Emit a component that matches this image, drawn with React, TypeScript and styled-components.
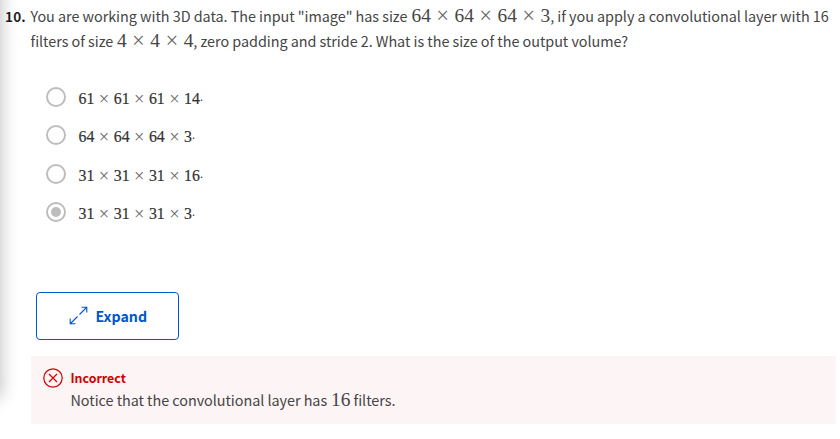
import React from "react";
import styled, { createGlobalStyle } from "styled-components";

const GlobalStyle = createGlobalStyle`
  * { box-sizing: border-box; }
  html, body { margin: 0; background: #fff; }
  body { overflow: hidden; }
`;

const Page = styled.main`
  position: relative;
  width: 840px;
  height: 439px;
  overflow: hidden;
  padding: 3px 4px 0 5px;
  background: #fff;
  color: #454545;
  font: 400 14.4px/25px "Noto Sans CJK SC", "Open Sans", sans-serif;
`;

const EdgeShadow = styled.div`
  position: absolute;
  left: -20px;
  top: -30px;
  width: 20px;
  height: 428px;
  box-shadow: 0 0 18px rgba(0, 0, 0, 0.28);
`;

const Question = styled.section`
  display: grid;
  grid-template-columns: 25.5px 1fr;
  height: 84px;
`;

const Ordinal = styled.b`
  color: #1f1f1f;
  font-size: 13.5px;
  line-height: 26px;
  letter-spacing: 0.2px;
`;

const Line = styled.div`
  display: flex;
  height: 25px;
  align-items: baseline;
  white-space: pre;
`;

const Run = styled.span<{ $width?: number }>`
  flex: none;
  width: ${(p) => (p.$width ? `${p.$width}px` : "auto")};
  letter-spacing: -0.042px;
`;

const MathRow = styled.span<{ $size: number; $heavy?: boolean }>`
  display: inline-flex;
  flex: none;
  align-items: baseline;
  font-family: "Liberation Serif", serif;
  font-size: ${(p) => p.$size}px;
  font-weight: 400;
  line-height: ${(p) => (p.$heavy ? 23 : 25)}px;
  -webkit-text-stroke: ${(p) => (p.$heavy ? "0.2px currentColor" : "0")};
`;

const Times = styled.span`
  display: flex;
  justify-content: center;
  width: 0.778em;
  margin: 0 0.222em;
  color: #666;
  -webkit-text-stroke: 0;
  span {
    font-size: 1.17em;
    line-height: 1;
    position: relative;
    top: 0.05em;
  }
`;

const Options = styled.div`
  display: flex;
  flex-direction: column;
  padding-left: 41px;
`;

const Option = styled.label`
  display: flex;
  align-items: flex-start;
  height: 38.4px;
  color: #333;
`;

const Radio = styled.span<{ $checked: boolean }>`
  display: grid;
  place-items: center;
  width: 20px;
  height: 20px;
  margin-right: 12.5px;
  border: 2px solid #bdbdbd;
  border-radius: 50%;
  &::after {
    content: "";
    width: 10px;
    height: 10px;
    border-radius: 50%;
    background: ${(p) => (p.$checked ? "#bdbdbd" : "transparent")};
  }
`;

const Stop = styled.span`
  position: relative;
  top: -3px;
  font-size: 11px;
`;

const ExpandButton = styled.button`
  display: flex;
  align-items: center;
  width: 143px;
  height: 48px;
  margin: 51.4px 0 16px 31px;
  padding: 0 0 0 32px;
  border: 1px solid #0056d2;
  border-radius: 4px;
  background: #fff;
  color: #0056d2;
  font: 700 14.2px/24px "Noto Sans CJK SC", sans-serif;
  svg { margin-right: 7.5px; }
`;

const Feedback = styled.section`
  display: flex;
  width: 805px;
  height: 68px;
  margin-left: 26px;
  padding: 12px 0 0 12px;
  background: #fdf4f5;
  svg { flex: none; margin-right: 7.5px; }
`;

const Verdict = styled.div`
  height: 19px;
  color: #d30001;
  font-size: 12.4px;
  font-weight: 700;
  line-height: 20px;
`;

function Product({ terms, size, heavy }: { terms: number[]; size: number; heavy?: boolean }) {
  return (
    <MathRow $size={size} $heavy={heavy}>
      {terms.map((term, i) => (
        <React.Fragment key={i}>
          {i > 0 && (
            <Times>
              <span>×</span>
            </Times>
          )}
          <span>{term}</span>
        </React.Fragment>
      ))}
    </MathRow>
  );
}

const choices = [
  [61, 61, 61, 14],
  [64, 64, 64, 3],
  [31, 31, 31, 16],
  [31, 31, 31, 3],
];

export default function App() {
  return (
    <>
      <GlobalStyle />
      <Page>
        <EdgeShadow />
        <Question>
          <Ordinal>10.</Ordinal>
          <div>
            <Line>
              <Run $width={381}>You are working with 3D data. The input "image" has size</Run>
              <Product terms={[64, 64, 64, 3]} size={19.36} />
              <Run>, if you apply a convolutional layer with 16</Run>
            </Line>
            <Line>
              <Run $width={86.5}>filters of size</Run>
              <Product terms={[4, 4, 4]} size={19.36} />
              <Run>, zero padding and stride 2. What is the size of the output volume?</Run>
            </Line>
          </div>
        </Question>
        <Options>
          {choices.map((terms, i) => (
            <Option key={i}>
              <Radio $checked={i === 3} />
              <Product terms={terms} size={15.85} heavy />
              <Stop>.</Stop>
            </Option>
          ))}
        </Options>
        <ExpandButton>
          <svg width="19" height="20" viewBox="0 0 19 20" fill="none" stroke="currentColor" strokeWidth="1.1">
            <path d="M1 18 L8.5 10.5 M10.5 8.5 L18 1 M12.5 1.2 H17.8 V6.5 M1.2 12.5 V17.8 H6.5" />
          </svg>
          Expand
        </ExpandButton>
        <Feedback>
          <svg width="20" height="20" viewBox="0 0 20 20" fill="none" stroke="#d30001" strokeWidth="1.2">
            <circle cx="10" cy="10" r="9.2" />
            <path d="M6 6 L14 14 M14 6 L6 14" />
          </svg>
          <div>
            <Verdict>Incorrect</Verdict>
            <Line>
              <Run $width={260.5}>Notice that the convolutional layer has</Run>
              <Product terms={[16]} size={19.36} />
              <Run> filters.</Run>
            </Line>
          </div>
        </Feedback>
      </Page>
    </>
  );
}
